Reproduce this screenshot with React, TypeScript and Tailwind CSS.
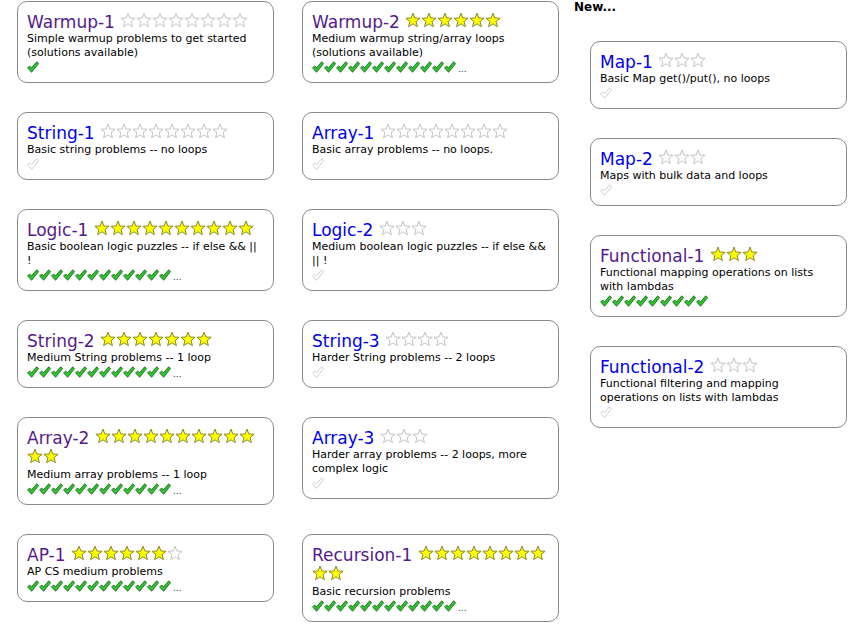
import React from "react";

type Section = {
    name: string;
    visited: boolean;
    stars: number;
    total: number;
    desc: string;
    checks: number;
    more?: boolean;
};

const grid: Section[] = [
    { name: "Warmup-1", visited: true, stars: 0, total: 8, desc: "Simple warmup problems to get started (solutions available)", checks: 1 },
    { name: "Warmup-2", visited: true, stars: 6, total: 6, desc: "Medium warmup string/array loops (solutions available)", checks: 12, more: true },
    { name: "String-1", visited: false, stars: 0, total: 8, desc: "Basic string problems -- no loops", checks: 0 },
    { name: "Array-1", visited: false, stars: 0, total: 8, desc: "Basic array problems -- no loops.", checks: 0 },
    { name: "Logic-1", visited: true, stars: 10, total: 10, desc: "Basic boolean logic puzzles -- if else && || !", checks: 12, more: true },
    { name: "Logic-2", visited: false, stars: 0, total: 3, desc: "Medium boolean logic puzzles -- if else && || !", checks: 0 },
    { name: "String-2", visited: true, stars: 7, total: 7, desc: "Medium String problems -- 1 loop", checks: 12, more: true },
    { name: "String-3", visited: false, stars: 0, total: 4, desc: "Harder String problems -- 2 loops", checks: 0 },
    { name: "Array-2", visited: true, stars: 12, total: 12, desc: "Medium array problems -- 1 loop", checks: 12, more: true },
    { name: "Array-3", visited: false, stars: 0, total: 3, desc: "Harder array problems -- 2 loops, more complex logic", checks: 0 },
    { name: "AP-1", visited: true, stars: 6, total: 7, desc: "AP CS medium problems", checks: 12, more: true },
    { name: "Recursion-1", visited: true, stars: 10, total: 10, desc: "Basic recursion problems", checks: 12, more: true },
];

const newer: Section[] = [
    { name: "Map-1", visited: false, stars: 0, total: 3, desc: "Basic Map get()/put(), no loops", checks: 0 },
    { name: "Map-2", visited: false, stars: 0, total: 3, desc: "Maps with bulk data and loops", checks: 0 },
    { name: "Functional-1", visited: true, stars: 3, total: 3, desc: "Functional mapping operations on lists with lambdas", checks: 9 },
    { name: "Functional-2", visited: false, stars: 0, total: 3, desc: "Functional filtering and mapping operations on lists with lambdas", checks: 0 },
];

function Star({ on }: { on: boolean }) {
    return (
        <svg width="16" height="16" viewBox="0 0 16 16" className="inline-block align-baseline">
            <path
                d="M8 1.1 L9.88 6.01 L15.13 6.28 L11.04 9.59 L12.41 14.67 L8 11.8 L3.59 14.67 L4.96 9.59 L0.87 6.28 L6.12 6.01 Z"
                fill={on ? "#ffff00" : "#ffffff"}
                stroke={on ? "#8c8a2a" : "#c4c4c4"}
                strokeWidth="1"
                strokeLinejoin="round"
            />
        </svg>
    );
}

function Check({ on }: { on: boolean }) {
    return (
        <svg width="12" height="12" viewBox="0 0 12 12" className="shrink-0">
            <path
                d="M0.6 6.9 L2.6 4.9 L4.5 6.8 L9.7 0.8 L11.6 2.6 L4.6 11.3 Z"
                fill={on ? "#2fc02f" : "#ffffff"}
                stroke={on ? "#1d6e1d" : "#c8c8c8"}
                strokeWidth="0.9"
                strokeLinejoin="round"
            />
        </svg>
    );
}

function Box({ s }: { s: Section }) {
    return (
        <div className="w-[257px] border border-[#8a8a8a] rounded-[10px] pt-[10px] pb-[8px] pl-[9px] pr-[10px] bg-white">
            <div className="text-[17px] leading-[20px]">
                <a className={s.visited ? "text-[#551a8b]" : "text-[#0000ee]"}>{s.name}</a>{" "}
                {Array.from({ length: s.total }).map((_, i) => (
                    <React.Fragment key={i}>
                        <Star on={i < s.stars} />
                        {"\u200b"}
                    </React.Fragment>
                ))}
            </div>
            <div className="text-[11px] leading-[14px] text-black">{s.desc}</div>
            <div className="flex items-center h-[14px]">
                {s.checks === 0 ? (
                    <Check on={false} />
                ) : (
                    Array.from({ length: s.checks }).map((_, i) => <Check key={i} on />)
                )}
                {s.more && <span className="self-end text-[9px] leading-[10px] ml-[2px] text-[#333]">...</span>}
            </div>
        </div>
    );
}

export default function App() {
    return (
        <div className="min-h-screen bg-white flex items-start pl-[17px]" style={{ fontFamily: '"DejaVu Sans", Verdana, sans-serif' }}>
            <div className="grid grid-cols-[257px_257px] gap-x-[28px] gap-y-[29px] items-start mt-[1px]">
                {grid.map((s) => (
                    <Box key={s.name} s={s} />
                ))}
            </div>
            <div className="ml-[15px]">
                <div className="text-[12px] leading-[14px] font-bold text-black">New...</div>
                <div className="ml-[16px] mt-[27px] flex flex-col gap-[29px]">
                    {newer.map((s) => (
                        <Box key={s.name} s={s} />
                    ))}
                </div>
            </div>
        </div>
    );
}
